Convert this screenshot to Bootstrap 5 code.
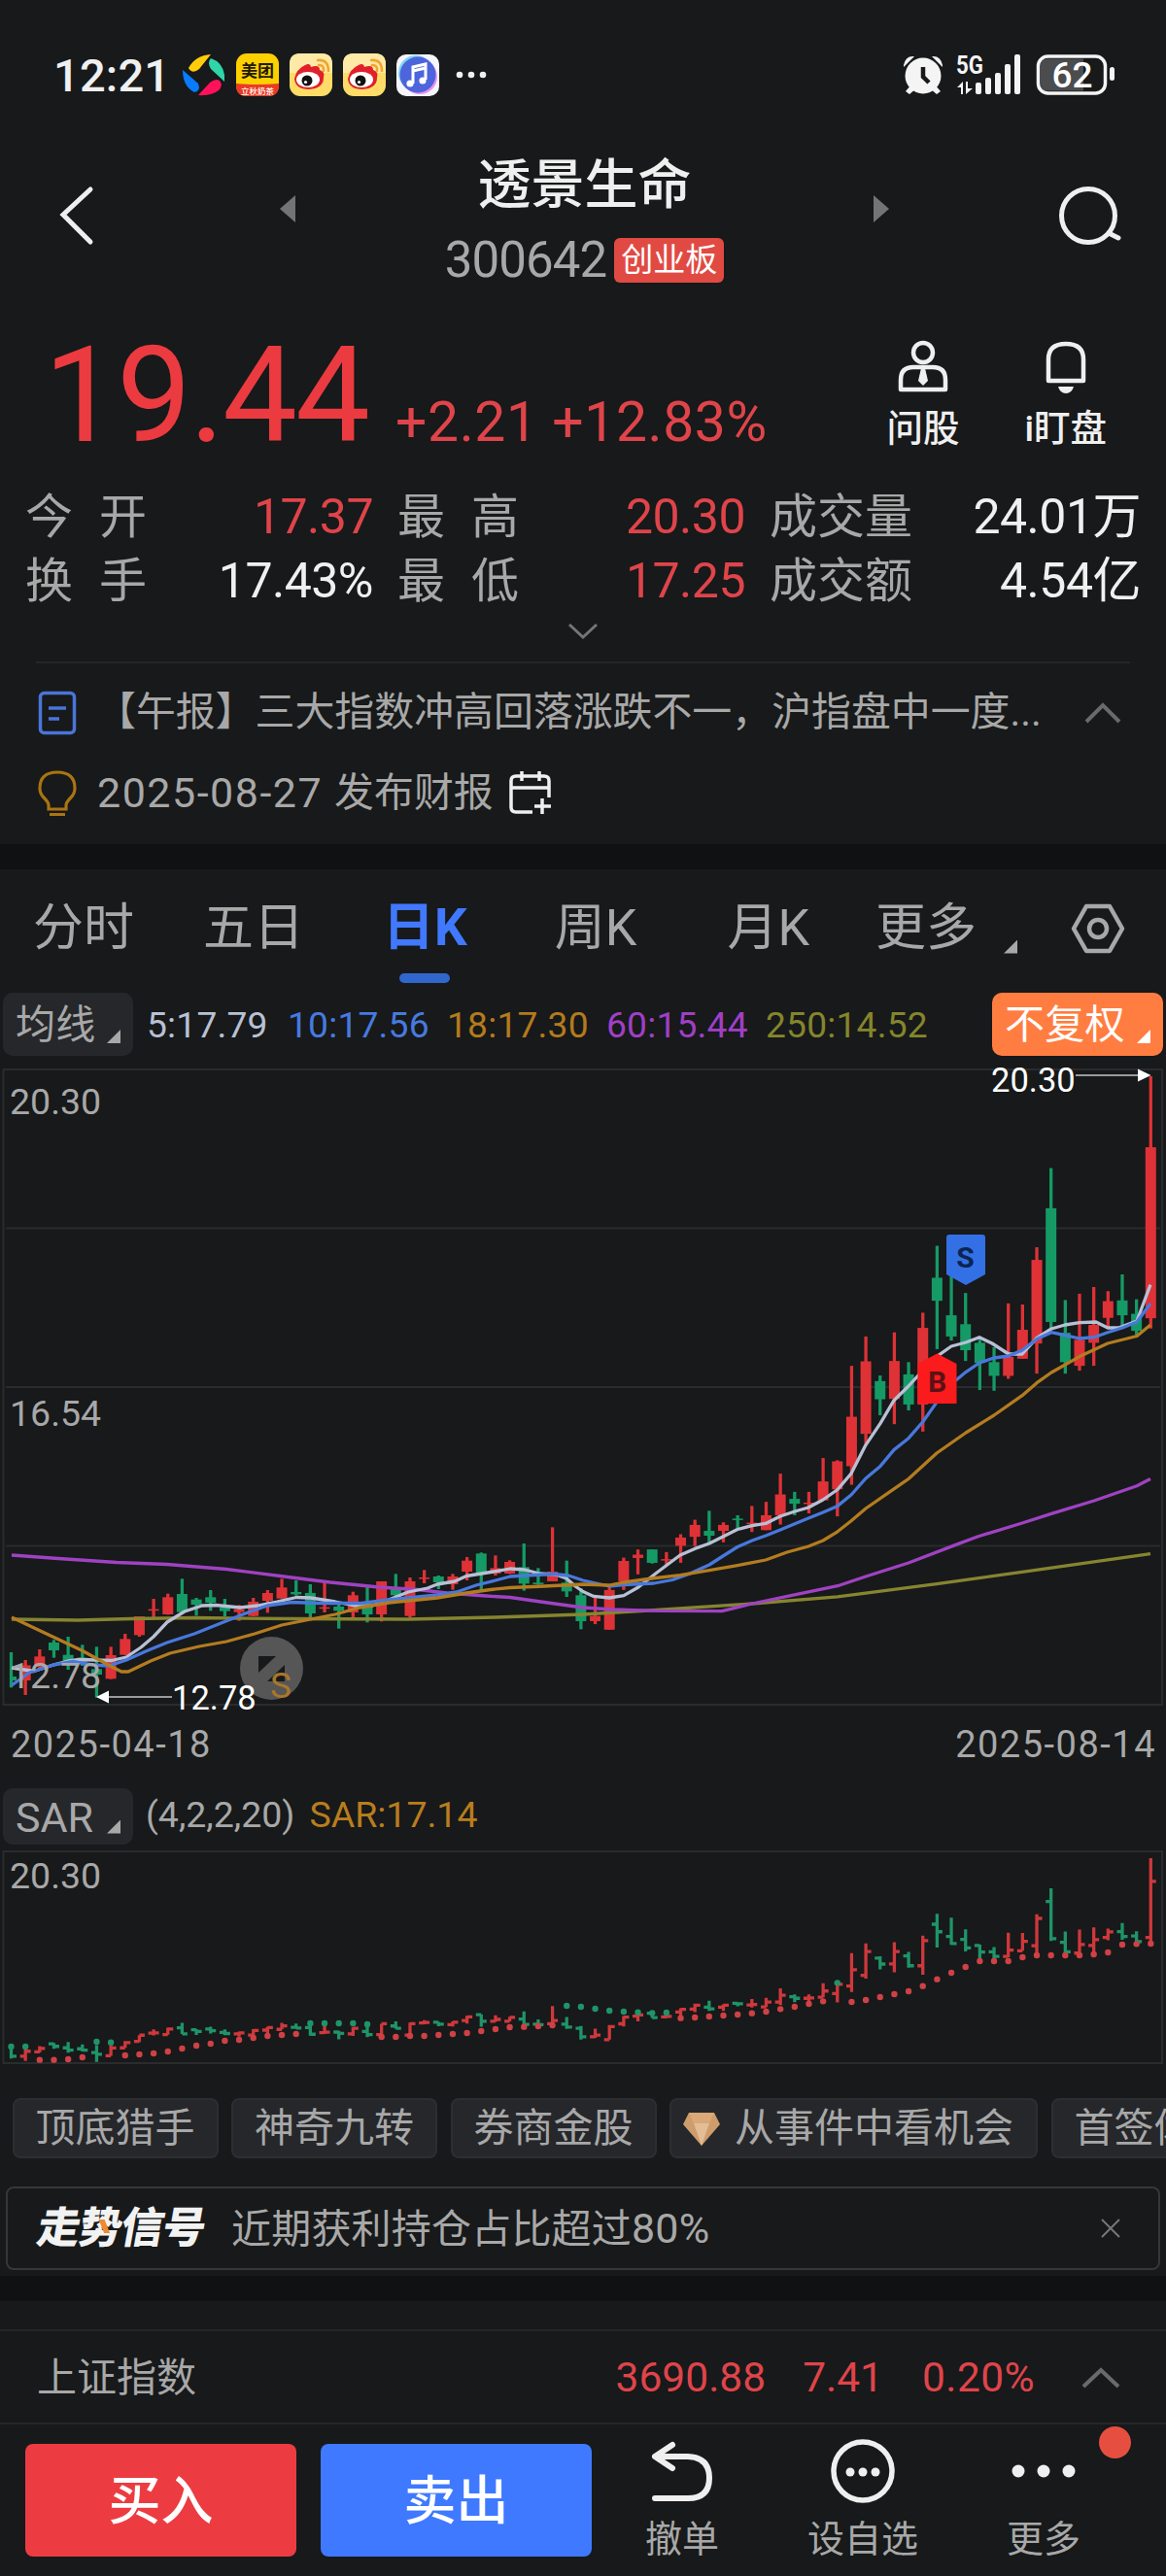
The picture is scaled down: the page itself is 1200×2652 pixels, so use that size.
<!DOCTYPE html>
<html lang="zh-CN">
<head>
  <meta charset="UTF-8" />
  <meta name="viewport" content="width=device-width, initial-scale=1.0"/>
  <title>透景生命 300642</title>
  <link href="https://cdn.jsdelivr.net/npm/bootstrap@5.3.0/dist/css/bootstrap.min.css" rel="stylesheet"/>
  <style>
    body {
      background: #17191a;
      color: #a8a8a8;
      font-family: Roboto, "Noto Sans CJK SC", sans-serif;
      line-height: 1;
      width: 1200px;
      overflow-x: hidden;
    }
    svg { display: block; flex-shrink: 0; }
    .c-white { color: #f0f0f0; }
    .c-red { color: #df444a; }
    .nowrap { white-space: nowrap; }
    .rule { height: 2px; background: #242628; }
    .band { height: 26px; background: #101113; }

    .status-bar { height: 154px; padding: 0 49px 0 55px; }
    .clock { font-size: 47px; font-weight: 500; letter-spacing: .2px; width: 133px; }
    .apps { gap: 11px; }

    .stock-head { height: 156px; padding: 0 45px 20px 60px; }
    .stock-head .title { margin-top: 12px; }
    .stock-name { font-size: 55px; font-weight: 500; color: #efefef; }
    .stock-code { font-size: 51px; letter-spacing: -.9px; }
    .board { background: #e04a43; color: #fff; border-radius: 6px; font-size: 33px; height: 46px; width: 113px; }
    .prev { margin: 0 0 14px 37px; }
    .next { margin: 0 21px 14px 0; }

    .quote { height: 189px; padding: 6px 61px 0 45px; }
    .price { font-size: 137px; color: #eb3b40; letter-spacing: -2px; }
    .change { font-size: 57px; margin-left: 28px; letter-spacing: .6px; }
    .tools { gap: 63px; margin-top: -5px; }
    .tools svg { margin-bottom: 17px; }
    .tool { font-size: 37.5px; font-weight: 500; color: #efefef; }
    .ask { margin-right: 4px; margin-left: -6px; }

    .stats { display: grid; grid-template-columns: 358px 358px 382px; column-gap: 25px; padding-left: 26px; font-size: 49px; }
    .stats > div { height: 66px; }
    .stats .key2 { width: 125px; }
    .stats .num { font-size: 50px; letter-spacing: -.5px; }
    .headline-rule { width: 1126px; }

    .news-box { padding-top: 9px; height: 186px; }
    .news { font-size: 40.9px; height: 83px; padding: 0 46px 0 39px; }
    .news-title { margin-left: 20px; }
    .report-date { font-size: 43px; letter-spacing: 1.5px; margin-left: 21px; }
    .report-txt { margin-left: 12px; }
    .cal { margin-left: 15px; }

    .tabs { height: 127px; font-size: 52px; padding: 0 42px 0 34px; }
    .tabs > div { height: 121px; }
    .tabs > div:nth-child(2) { margin-left: 71px; }
    .tabs > div:nth-child(3) { margin-left: 81px; }
    .tabs > div:nth-child(4) { margin-left: 90px; }
    .tabs > div:nth-child(5) { margin-left: 93px; }
    .tabs > div:nth-child(6) { margin-left: 68px; }
    .tabs > div:nth-child(7) { margin-left: auto; }
    .tabs .corner { margin: 38px 0 0 28px; }
    .tab-on { color: #4079fd; font-weight: 700; font-size: 53px; }
    .tab-bar { width: 52px; height: 10px; border-radius: 5px; background: #3166cc; left: 17px; bottom: 4px; }
    .corner { width: 14px; height: 14px; background: currentColor; clip-path: polygon(100% 0, 100% 100%, 0 100%); }

    .ma-row { height: 65px; padding: 0 3px; font-size: 37.2px; letter-spacing: .2px; }
    .ma { margin-left: 14px; width: 125px; flex: none; }
    .ma + .ma { width: 144px; margin-left: 20px; }
    .ma, .pick > span:first-child { padding-top: 2px; }
    .pick { width: 134px; height: 65px; border-radius: 10px; background: #25272b; font-size: 41px; padding: 0 13px; }
    .pick .corner { margin-top: 25px; }
    .pick-hot { width: 176px; background: #ff7d40; color: #fff; }
    .dates { font-size: 38px; height: 82px; padding: 0 10px 8px 11px; letter-spacing: 1.5px; }
    .sar-row { height: 58px; padding: 0 3px; font-size: 37.5px; }
    .sar-row .pick { height: 58px; font-size: 43px; padding-top: 1px; }
    .sar-row .corner { margin-top: 20px; }
    .sar-arg { margin: 0 15px 0 13px; }
    .sar-val { color: #b97d1e; }
    .sar-arg, .sar-val { padding-bottom: 2px; }

    .chips { gap: 13.5px; padding: 30px 0 0 12.5px; font-size: 41px; height: 121px; overflow: hidden; }
    .chip { height: 62px; border-radius: 8px; background: #25272b; border: 2px solid #2c2e32; padding: 1px 22px 0; flex-shrink: 0; }
    .chip-gem { padding: 1px 23px 0 12px; gap: 15px; }
    .signal { height: 86px; margin: 0 6px 6px; border: 2px solid #353738; border-radius: 8px; padding: 0 39px 0 31px; font-size: 41px; }
    .signal-logo { font-size: 44px; font-weight: 900; color: #f2f2f2; transform: skewX(-10deg); letter-spacing: -1px; width: 171px; }
    .signal-txt { margin-left: 28px; letter-spacing: .2px; }
    .signal-txt .pct { font-size: 43px; }
    .slash { width: 6px; height: 14px; background: #ee8a30; left: 65px; top: 13px; transform: skewX(30deg); }

    .gap-line { height: 29px; }
    .index-row { height: 94px; padding: 2px 47px 0 38px; font-size: 41px; }
    .index-row .c-red { font-size: 42.5px; }
    .idx2 { margin-left: 38px; }
    .idx3 { margin: 0 48px 0 40px; letter-spacing: .4px; }
    .actions { padding: 20px 0 20px 26px; height: 156px; }
    .deal { width: 279px; height: 116px; border-radius: 8px; font-size: 54px; font-weight: 500; padding-top: 8px; }
    .deal, .deal:hover { color: #fff; }
    .deal-buy { background: #ec3c41; margin-right: 25px; }
    .deal-sell { background: #3f79ff; }
    .act { font-size: 38px; height: 122px; margin-top: -5px; }
    .act1 { margin-left: 55px; }
    .act2 { margin-left: 91px; }
    .act3 { margin-left: 91px; }
    .dot { width: 33px; height: 33px; border-radius: 50%; background: #e64f40; right: -52px; top: -13px; }
  </style>
</head>
<body>

  <!-- Status bar -->
  <div class="status-bar d-flex align-items-center justify-content-between">
    <div class="d-flex align-items-center">
      <div class="clock c-white">12:21</div>
      <div class="apps d-flex align-items-center">
        <svg width="44" height="44" viewBox="0 0 44 44">
          <path d="M6 15Q13 2 29 1L17 16Q10 22 6 15Z" fill="#ffcc0a"/>
          <path d="M29 5Q41 9 43 22V29L29 16Q25 9 29 5Z" fill="#2fd6a8"/>
          <path d="M38 28Q42 33 37 38Q30 44 16 43L28 30Q34 25 38 28Z" fill="#ff1259"/>
          <path d="M0 17L16 31Q19 39 12 40Q0 34 0 17Z" fill="#087bff"/>
        </svg>
        <svg width="44" height="44" viewBox="0 0 44 44">
          <rect width="44" height="44" rx="11" fill="#ffd000"/>
          <path d="M0 31Q22 33 44 31V33Q44 44 33 44H11Q0 44 0 33Z" fill="#ea3a24"/>
          <text x="22" y="24" font-size="17" font-weight="700" fill="#221a00" text-anchor="middle">美团</text>
          <text x="22" y="41.500" font-size="8.500" font-weight="500" fill="#fff" text-anchor="middle">立秋奶茶</text>
        </svg>
        <svg width="44" height="44" viewBox="0 0 44 44"><use href="#weibo"/></svg>
        <svg width="44" height="44" viewBox="0 0 44 44">
          <g id="weibo">
            <rect width="44" height="44" rx="11" fill="#ffdc68"/>
            <path d="M0 20V11Q0 0 11 0H33Q44 0 44 11V20Z" fill="#ffe9a6"/>
            <path d="M5 26Q7 16 16 12Q21 9 22 14Q31 11 31 17Q37 19 35 25Q35 36 20 37Q6 37 5 26Z" fill="#e1202a"/>
            <ellipse cx="19" cy="27" rx="12" ry="8" fill="#fff"/>
            <circle cx="18" cy="28" r="5.5" fill="#111"/>
            <circle cx="16.5" cy="29.5" r="1.6" fill="#fff"/>
            <path d="M29 7Q40 6 40 18M30 12Q36 12 35 18" fill="none" stroke="#f2a52c" stroke-width="2.6" stroke-linecap="round"/>
          </g>
        </svg>
        <svg width="44" height="44" viewBox="0 0 44 44">
          <rect width="44" height="43" y="1" rx="10" fill="#f6f6fa"/>
          <circle cx="20" cy="20" r="18" fill="#80d5f2"/><circle cx="24" cy="24" r="18" fill="#e992ed"/>
          <circle cx="22" cy="22" r="18.5" fill="#4c65dc"/>
          <path d="M17 31V14L30 11V27M17 18L30 15" fill="none" stroke="#fff" stroke-width="3"/>
          <circle cx="14" cy="31" r="3.6" fill="#fff"/><circle cx="27" cy="28" r="3.6" fill="#fff"/>
        </svg>
      </div>
      <svg width="34" height="10" class="ms-3" viewBox="0 0 34 10" fill="#f0f0f0"><circle cx="5" cy="5" r="3.3"/><circle cx="17" cy="5" r="3.3"/><circle cx="29" cy="5" r="3.3"/></svg>
    </div>
    <svg width="222" height="44" viewBox="0 0 222 44" style="overflow:visible">
      <g fill="#f4f4f4">
        <circle cx="21" cy="23" r="18.5"/>
        <path d="M1 12Q3 2 12 3L1 14ZM41 12Q39 2 30 3L41 14ZM3 39L9 32L14 36L7 42ZM39 39L33 32L28 36L35 42Z"/>
        <rect x="75" y="30" width="6" height="12" rx="2"/><rect x="85" y="25" width="6" height="17" rx="2"/>
        <rect x="95" y="20" width="6" height="22" rx="2"/><rect x="105" y="11" width="6" height="31" rx="2"/>
        <rect x="115" y="1" width="6" height="41" rx="2"/>
        <rect x="213" y="14" width="5" height="14" rx="2.5"/>
        <path d="M56 35L62 29V42H60V35ZM65 29H67V36H72L65 42Z"/>
      </g>
      <path d="M21 14V24L27 30" fill="none" stroke="#17191a" stroke-width="4.5"/>
      <rect x="139.500" y="3" width="69" height="38" rx="10" fill="none" stroke="#f4f4f4" stroke-width="3.500"/>
      <path d="M149 5.500H186V38.500H149Q142 38.500 142 31V13Q142 5.500 149 5.500Z" fill="#4b4c4d"/>
      <text x="55" y="21" font-size="26" font-weight="700" fill="#f4f4f4" textLength="28" lengthAdjust="spacingAndGlyphs">5G</text>
      <text x="174.500" y="34.500" font-size="37" font-weight="500" fill="#fff" text-anchor="middle">62</text>
    </svg>
  </div>

  <!-- Stock title -->
  <header class="stock-head d-flex align-items-center justify-content-between">
    <svg width="38" height="62" viewBox="0 0 38 62" fill="none" stroke="#efefef" stroke-width="5" stroke-linecap="round"><path d="M33 4L5 30L33 58"/></svg>
    <svg class="prev" width="16" height="28" viewBox="0 0 16 28"><path d="M16 0V28L0 14Z" fill="#747474"/></svg>
    <div class="title text-center">
      <div class="stock-name">透景生命</div>
      <div class="d-flex align-items-center justify-content-center gap-2 mt-4">
        <span class="stock-code">300642</span>
        <span class="board d-flex align-items-center justify-content-center">创业板</span>
      </div>
    </div>
    <svg class="next" width="16" height="28" viewBox="0 0 16 28"><path d="M0 0V28L16 14Z" fill="#747474"/></svg>
    <svg width="66" height="62" viewBox="0 0 66 62" fill="none" stroke="#efefef" stroke-width="5" stroke-linecap="round"><circle cx="31" cy="31" r="27.500"/><path d="M52 49L62 54"/></svg>
  </header>

  <!-- Quote -->
  <section class="quote d-flex justify-content-between align-items-center">
    <div class="d-flex align-items-baseline">
      <span class="price">19.44</span>
      <span class="change c-red nowrap">+2.21 +12.83%</span>
    </div>
    <div class="d-flex text-center tools">
      <div class="tool ask d-flex flex-column align-items-center">
        <svg width="54" height="56" viewBox="0 0 54 56" fill="none" stroke="#efefef" stroke-width="4.500"><circle cx="27" cy="13" r="10"/><path d="M4 51V41Q4 28 17 28H37Q50 28 50 41V51Z" stroke-linejoin="round"/><path d="M25 29H29L32 42L27 47L22 42Z" fill="#efefef" stroke="none"/></svg>
        <span>问股</span>
      </div>
      <div class="tool d-flex flex-column align-items-center">
        <svg width="44" height="56" viewBox="0 0 44 56" fill="none" stroke="#efefef" stroke-width="4.500"><path d="M4 42V20Q4 4 22 4Q40 4 40 20V42Z" stroke-linejoin="round"/><path d="M14 48H30Q28 55 22 55Q16 55 14 48Z" fill="#efefef" stroke="none"/></svg>
        <span>i盯盘</span>
      </div>
    </div>
  </section>

  <section class="stats">
    <div class="d-flex justify-content-between align-items-center"><span class="key2 d-flex justify-content-between"><i class="fst-normal">今</i><i class="fst-normal">开</i></span><span class="num c-red">17.37</span></div>
    <div class="d-flex justify-content-between align-items-center"><span class="key2 d-flex justify-content-between"><i class="fst-normal">最</i><i class="fst-normal">高</i></span><span class="num c-red">20.30</span></div>
    <div class="d-flex justify-content-between align-items-center"><span>成交量</span><span class="num c-white">24.01万</span></div>
    <div class="d-flex justify-content-between align-items-center"><span class="key2 d-flex justify-content-between"><i class="fst-normal">换</i><i class="fst-normal">手</i></span><span class="num c-white">17.43%</span></div>
    <div class="d-flex justify-content-between align-items-center"><span class="key2 d-flex justify-content-between"><i class="fst-normal">最</i><i class="fst-normal">低</i></span><span class="num c-red">17.25</span></div>
    <div class="d-flex justify-content-between align-items-center"><span>成交额</span><span class="num c-white">4.54亿</span></div>
  </section>
  <div class="d-flex justify-content-center">
    <svg width="32" height="50" viewBox="0 0 32 50" fill="none" stroke="#757575" stroke-width="3"><path d="M2 12L16 25L30 12"/></svg>
  </div>
  <div class="rule headline-rule mx-auto"></div>

  <!-- News -->
  <section class="news-box">
    <div class="news d-flex align-items-center">
      <svg width="40" height="46" viewBox="0 0 40 46" fill="none" stroke="#4a75d8" stroke-width="3.500"><rect x="2.500" y="2.500" width="35" height="41" rx="4"/><path d="M11 18H29M11 29H22"/></svg>
      <span class="news-title nowrap">【午报】三大指数冲高回落涨跌不一，沪指盘中一度...</span>
      <svg width="38" height="24" viewBox="0 0 38 24" class="ms-auto" fill="none" stroke="#6a6a6a" stroke-width="4"><path d="M2 21L19 4L36 21"/></svg>
    </div>
    <div class="news d-flex align-items-center">
      <svg width="40" height="48" viewBox="0 0 40 48" fill="none" stroke="#aa7411" stroke-width="3.200"><path d="M11 36Q11 33 6 28Q2 24 2 18.500Q2 2 20 2Q38 2 38 18.500Q38 24 34 28Q29 33 29 36V40H11ZM12 45.500H28"/></svg>
      <span class="report-date nowrap">2025-08-27</span><span class="report-txt nowrap">发布财报</span>
      <svg width="46" height="46" viewBox="0 0 46 46" fill="none" stroke="#efefef" stroke-width="3.500" class="cal"><path d="M25 42H8Q3 42 3 37V10Q3 5 8 5H37Q42 5 42 10V27M3 17H42M14 0V10M32 0V10M35 28V44M27 36H44"/></svg>
    </div>
  </section>
  <div class="band"></div>

  <!-- Period tabs -->
  <nav class="tabs d-flex">
    <div class="d-flex align-items-center">分时</div>
    <div class="d-flex align-items-center">五日</div>
    <div class="d-flex align-items-center tab-on position-relative">日K<span class="tab-bar position-absolute"></span></div>
    <div class="d-flex align-items-center">周K</div>
    <div class="d-flex align-items-center">月K</div>
    <div class="d-flex align-items-center">更多<span class="corner"></span></div>
    <div class="d-flex align-items-center">
      <svg width="56" height="52" viewBox="0 0 56 52" fill="none" stroke="#a8a8a8" stroke-width="4.500" stroke-linejoin="round"><path d="M16 3H40L53 26L40 49H16L3 26Z"/><circle cx="28" cy="26" r="9"/></svg>
    </div>
  </nav>

  <div class="ma-row d-flex align-items-center">
    <div class="pick d-flex align-items-center justify-content-between"><span>均线</span><span class="corner"></span></div>
    <span class="ma" style="color:#b9c0d4">5:17.79</span>
    <span class="ma" style="color:#477ae0">10:17.56</span>
    <span class="ma" style="color:#b57a1c">18:17.30</span>
    <span class="ma" style="color:#a03fc6">60:15.44</span>
    <span class="ma" style="color:#85852c">250:14.52</span>
    <div class="pick pick-hot d-flex align-items-center justify-content-between ms-auto"><span>不复权</span><span class="corner"></span></div>
  </div>

  <!-- Candles, drawn by the script below -->
  <svg id="kline" width="1200" height="672" viewBox="0 1087 1200 672" style="overflow:visible"></svg>
  <div class="dates d-flex justify-content-between align-items-center">
    <span>2025-04-18</span><span>2025-08-14</span>
  </div>

  <div class="sar-row d-flex align-items-center">
    <div class="pick d-flex align-items-center justify-content-between"><span>SAR</span><span class="corner"></span></div>
    <span class="sar-arg">(4,2,2,20)</span>
    <span class="sar-val">SAR:17.14</span>
  </div>
  <svg id="sar" width="1200" height="231" viewBox="0 1899 1200 231"></svg>

  <!-- Shortcuts -->
  <div class="chips d-flex">
    <div class="chip d-flex align-items-center">顶底猎手</div>
    <div class="chip d-flex align-items-center">神奇九转</div>
    <div class="chip d-flex align-items-center">券商金股</div>
    <div class="chip chip-gem d-flex align-items-center">
      <svg width="38" height="34" viewBox="0 0 38 34"><path d="M6 0H32L38 12L19 34L0 12Z" fill="#cf9c6c"/><path d="M6 0H32L27 11H11Z" fill="#dba877"/><path d="M11 11H27L19 34Z" fill="#e3bd95"/></svg>
      <span>从事件中看机会</span>
    </div>
    <div class="chip d-flex align-items-center">首签体验</div>
  </div>

  <div class="signal d-flex align-items-center">
    <div class="signal-logo position-relative nowrap">走势信号<span class="slash position-absolute"></span></div>
    <span class="signal-txt nowrap">近期获利持仓占比超过<span class="pct">80%</span></span>
    <svg width="20" height="20" viewBox="0 0 20 20" class="ms-auto" stroke="#777" stroke-width="2"><path d="M1 1L19 19M19 1L1 19"/></svg>
  </div>
  <div class="band"></div>

  <!-- Index line -->
  <div class="gap-line"></div>
  <div class="rule"></div>
  <div class="index-row d-flex align-items-center">
    <span class="me-auto">上证指数</span>
    <span class="c-red">3690.88</span>
    <span class="c-red idx2">7.41</span>
    <span class="c-red idx3">0.20%</span>
    <svg width="40" height="24" viewBox="0 0 40 24" fill="none" stroke="#6a6a6a" stroke-width="4"><path d="M2 21L20 4L38 21"/></svg>
  </div>
  <div class="rule"></div>

  <footer class="actions d-flex">
    <button class="btn deal deal-buy">买入</button>
    <button class="btn deal deal-sell">卖出</button>
    <div class="act act1 d-flex flex-column align-items-center justify-content-between">
      <svg width="64" height="66" viewBox="0 0 64 66" fill="none" stroke="#efefef" stroke-width="6" stroke-linecap="round" stroke-linejoin="round"><path d="M22 6L4 18L22 30M4 18H38Q60 19 60 40Q60 61 38 61H4"/></svg>
      <span>撤单</span>
    </div>
    <div class="act act2 d-flex flex-column align-items-center justify-content-between">
      <svg width="66" height="66" viewBox="0 0 66 66" fill="#efefef"><circle cx="33" cy="33" r="30" fill="none" stroke="#efefef" stroke-width="5.500"/><circle cx="20" cy="34" r="4.500"/><circle cx="33" cy="34" r="4.500"/><circle cx="46" cy="34" r="4.500"/></svg>
      <span>设自选</span>
    </div>
    <div class="act act3 d-flex flex-column align-items-center justify-content-between position-relative">
      <svg width="66" height="66" viewBox="0 0 66 66" fill="#efefef"><circle cx="7" cy="33" r="6.500"/><circle cx="33" cy="33" r="6.500"/><circle cx="59" cy="33" r="6.500"/></svg>
      <span>更多</span>
      <span class="dot position-absolute"></span>
    </div>
  </footer>

  <script src="https://cdn.jsdelivr.net/npm/bootstrap@5.3.0/dist/js/bootstrap.bundle.min.js"></script>
  <script>
    const RED = "#de3236", GREEN = "#159a66";
    const xAt = i => 11.5 + i * 14.66;

    // up/down, high, low, body top, body bottom
    const left = `G603,712,678,690 R627,735,643,690 R594,655,616,648 G565,620,573,597 G555,657,611,632 G580,645,620,632
      G586,743,655,672 R586,686,612,685 R546,612,562,611 R492,555,492,550 R438,495,470,473 R422,487,433,486 G376,480,423,479
      G435,490,440,456 G411,475,433,450 G438,492,465,476 R457,506,470,479 R435,492,447,491 R411,481,420,444 R376,437,403,437
      G381,428,417,424 G393,496,420,483 R381,480,464,468 G450,530,462,475 R416,498,427,480 G400,511,457,486 R384,508,384,486
      G361,430,405,427 R372,497,384,491 R349,390,372,376 G366,408,369,387 R361,410,369,393 R309,381,320,354 G295,413,298,360
      R304,366,343,360 R319,361,324,360 G267,413,340,391 G343,395,388,393 R217,384,354,384 G320,432,388,415 G405,532,427,507`;
    const right = `R1420,1495,1473,1487 R1390,1510,1403,1510 R1316,1403,1325,1380 R1294,1361,1308,1317 G1294,1332,1294,1330
      R1301,1335,1320,1323 R1253,1330,1262,1284 R1214,1285,1228,1260 G1190,1275,1244,1257 R1221,1275,1228,1244 G1202,1237,1211,1215
      R1177,1247,1222,1226 R1166,1242,1202,1242 R1090,1227,1146,1202 G1139,1202,1158,1171 R1139,1197,1168,1171 R1048,1162,1111,1162
      R1054,1205,1057,1132 R800,1120,937,1070 R721,1010,788,983 G826,933,841,890 R710,957,787,889 G790,920,823,904 R657,977,698,904
      G477,755,563,625 G510,732,664,721 G604,787,688,758 G730,865,738,792 G750,867,790,827 R632,835,776,827 R635,781,703,781
      R481,821,515,740 G268,700,376,682 G623,821,711,790 R606,813,730,800 R588,800,690,738 R599,695,626,671 G554,690,624,664
      G621,717,660,706 R21,700,212,672`;
    const parse = (s, f) => s.trim().split(/\s+/).map(c => [c[0], ...c.slice(1).split(",").map(v => f(+v))]);
    const bars = parse(left, v => 1500 + v / 3).concat(parse(right, v => 1100 + v / 2.6133));

    const lines = {
      "#868530": "12,1667 80,1668 135,1666.5 200,1665.5 300,1666.5 420,1667 510,1665 600,1662 676,1657.5 774,1651 862,1643.8 964,1630.7 1059,1617.4 1184,1599.7",
      "#9f42c2": "12,1601 60,1604.5 120,1608.5 172,1610.5 233,1615.5 300,1624 340,1629 390,1634 430,1636.5 460,1640 500,1643 525,1644.5 560,1649.5 600,1655 631,1657 676,1658.3 743,1658.7 774,1651 814,1642.6 862,1632.7 891,1623 935,1609 983,1590.6 1006,1582 1052,1568 1082,1558.4 1126,1545 1170,1529.7 1184,1522.5",
      "#b8c0d6": "12,1717 35,1720.5 55,1714 70,1710 82,1708.5 115,1709.5 130,1706 145,1696 158,1685 172,1670 190,1659 208,1653 222,1652.5 247,1655 265,1653 285,1649 305,1644.5 320,1645 345,1649 365,1653 383,1653 400,1647 420,1639 440,1635 450,1631 468,1628 480,1622.5 508,1618 525,1615 540,1616 555,1620 572,1621 583,1625 592,1633 600,1638.5 611,1643.4 627,1645 642,1642.6 657,1634 676,1619 700,1601 715,1594.4 730,1589 744,1582 759,1574.5 774,1570.7 788,1568.4 803,1561 818,1556 832,1552 847,1544 862,1533.5 876,1517 891,1487.6 906,1465.4 920,1441.7 935,1427 950,1410.7 964,1396.6 979,1386 994,1382 1008,1376.7 1021,1383 1038,1394 1052,1394 1067,1377.4 1082,1368 1096,1364 1111,1361.7 1128,1361 1140,1367 1151,1367 1170,1360 1184,1322.7",
      "#4878dc": "12,1735 30,1722 55,1714 75,1710.5 95,1714 112,1715 130,1709 150,1700 172,1691 200,1682 225,1672 250,1662 275,1653 300,1649.5 330,1650.5 372,1650.5 400,1647 420,1645 450,1642 470,1639 490,1632 510,1627 525,1623 540,1622 570,1620.5 585,1622 600,1627 627,1633 642,1631.5 673,1630 692,1626.5 711,1619.6 730,1611 744,1602 759,1592.5 774,1586 788,1581 803,1575 818,1568.8 832,1563 847,1557 862,1550.4 876,1539 891,1522 906,1509.4 920,1492.6 935,1480.7 950,1463.5 964,1443.6 979,1425 994,1412.6 1008,1403 1023,1398 1038,1396 1052,1390 1067,1378.6 1082,1371.7 1096,1374.7 1111,1378 1126,1376.7 1140,1371.7 1155,1367 1170,1361 1184,1342",
      "#b47c20": "12,1665 50,1683 84,1699 115,1716 125,1721 132,1721 155,1710 175,1702 205,1695 233,1690 262,1682 290,1673 320,1667 345,1662 370,1655 400,1650 450,1645 480,1640 505,1636.5 525,1634.5 560,1633 600,1631 627,1632 642,1629 671,1625 700,1621.6 730,1616.6 759,1611.6 788,1606 810,1598 832,1592 847,1586 862,1576.8 876,1565.7 891,1553 920,1532.8 935,1522.5 964,1496 994,1475 1023,1457 1052,1436.7 1067,1423.7 1082,1413 1111,1396.6 1140,1383 1170,1375.5 1184,1364"
    };

    let k = `<g fill="none" stroke="#292b2d" stroke-width="2"><rect x="3.5" y="1101" width="1192.500" height="654"/>
      <path d="M6 1264.500H1194M6 1428H1194M6 1591.500H1194"/></g>`;
    bars.forEach(([t, h, l, a, b], i) => {
      const c = t === "R" ? RED : GREEN, x = xAt(i);
      const w0 = i ? 5.5 : 1.5;
      k += `<path d="M${x} ${h}V${l}" stroke="${c}" stroke-width="3.3"/><rect x="${x - w0}" y="${a}" width="${5.5 + w0}" height="${Math.max(b - a, 1.5)}" fill="${c}"/>`;
    });
    for (const c in lines) {
      k += `<polyline points="${lines[c]}" fill="none" stroke="${c}" stroke-width="3.3" stroke-linejoin="round"/>`;
    }
    // labels, trade marks and the zoom handle
    k += `<g font-size="37.500" fill="#a8a8a8"><text x="10" y="1147">20.30</text><text x="10" y="1467.500">16.54</text><text x="10" y="1738">12.78</text></g>
      <circle cx="279.500" cy="1717.500" r="32.500" fill="#565656"/>
      <path d="M266 1705H284L266 1722ZM293 1714V1731H275Z" fill="#17191a"/>
      <text x="278" y="1748" font-size="37" fill="#a9762a">S</text>
      <g font-size="34.500" fill="#fff"><text x="1020" y="1124">20.30</text><text x="177" y="1760">12.78</text></g>
      <path d="M1107 1107H1172M112 1747H177" stroke="#9a9a9a" stroke-width="2"/>
      <path d="M1171 1100.500L1184.500 1107L1171 1113.500ZM112 1740.500L99 1747L112 1753.500Z" fill="#fff"/>
      <path d="M974 1274Q974 1271 977 1271H1011Q1014 1271 1014 1274V1312L994 1323L974 1312Z" fill="#3370e6"/>
      <path d="M944.500 1404L964.500 1393.500L984.500 1404V1445H944.500Z" fill="#fb1a1c"/>
      <g font-size="30" font-weight="700" text-anchor="middle"><text x="993.500" y="1305" fill="#0d2450">S</text><text x="964.500" y="1433" fill="#5a1216">B</text></g>`;
    document.getElementById("kline").innerHTML = k;

    // SAR pane: bars share the candle data, squeezed to the pane height
    const sy = y => 1913 + (y - 1108) * 0.3278;
    const dotsLeft = "G621 G621 R662 R662 R660 R654 G606 G608 R648 R645 R642 R636 R627 R618 R612 R603 R600 R594 R588 R585 R582 G549 G549 G549 G549 G552 R591 R591 R588 R588 R585 R582 R579 R573 R567 R561 R560 R558 R555 G495 G498";
    const dotsRight = "G744 G750 G753 G755 G757 G756 R773 R771 R768 R765 R762 R758 R753 R745 R738 R729 R721 G664 R723 R717 R708 R699 R690 R674 R653 R633 R615 R597 R597 R597 R585 R579 R579 R579 R579 R576 R570 R546 R544 R543";
    const dots = parse(dotsLeft, v => 1900 + v / 3).concat(parse(dotsRight, v => 1820 + v / 3));
    let s = `<rect x="3.500" y="1906" width="1192.500" height="218" fill="none" stroke="#292b2d" stroke-width="2"/>
      <text x="10" y="1943.500" font-size="37.500" fill="#a8a8a8">20.30</text>`;
    bars.forEach(([t, h, l, a, b], i) => {
      const x = xAt(i), up = t === "R", open = sy(up ? b : a), close = sy(up ? a : b);
      s += `<path d="M${x} ${sy(h)}V${sy(l)}M${i ? x - 5.5 : x} ${open}H${x}M${x} ${close}H${x + 5.5}" stroke="${up ? "#cf383c" : "#1f9468"}" stroke-width="3.3"/>`;
    });
    dots.forEach(([t, y], i) => {
      s += `<circle cx="${xAt(i)}" cy="${y}" r="3.2" fill="${t === "R" ? "#cf4145" : "#1f9468"}"/>`;
    });
    document.getElementById("sar").innerHTML = s;
  </script>
</body>
</html>
